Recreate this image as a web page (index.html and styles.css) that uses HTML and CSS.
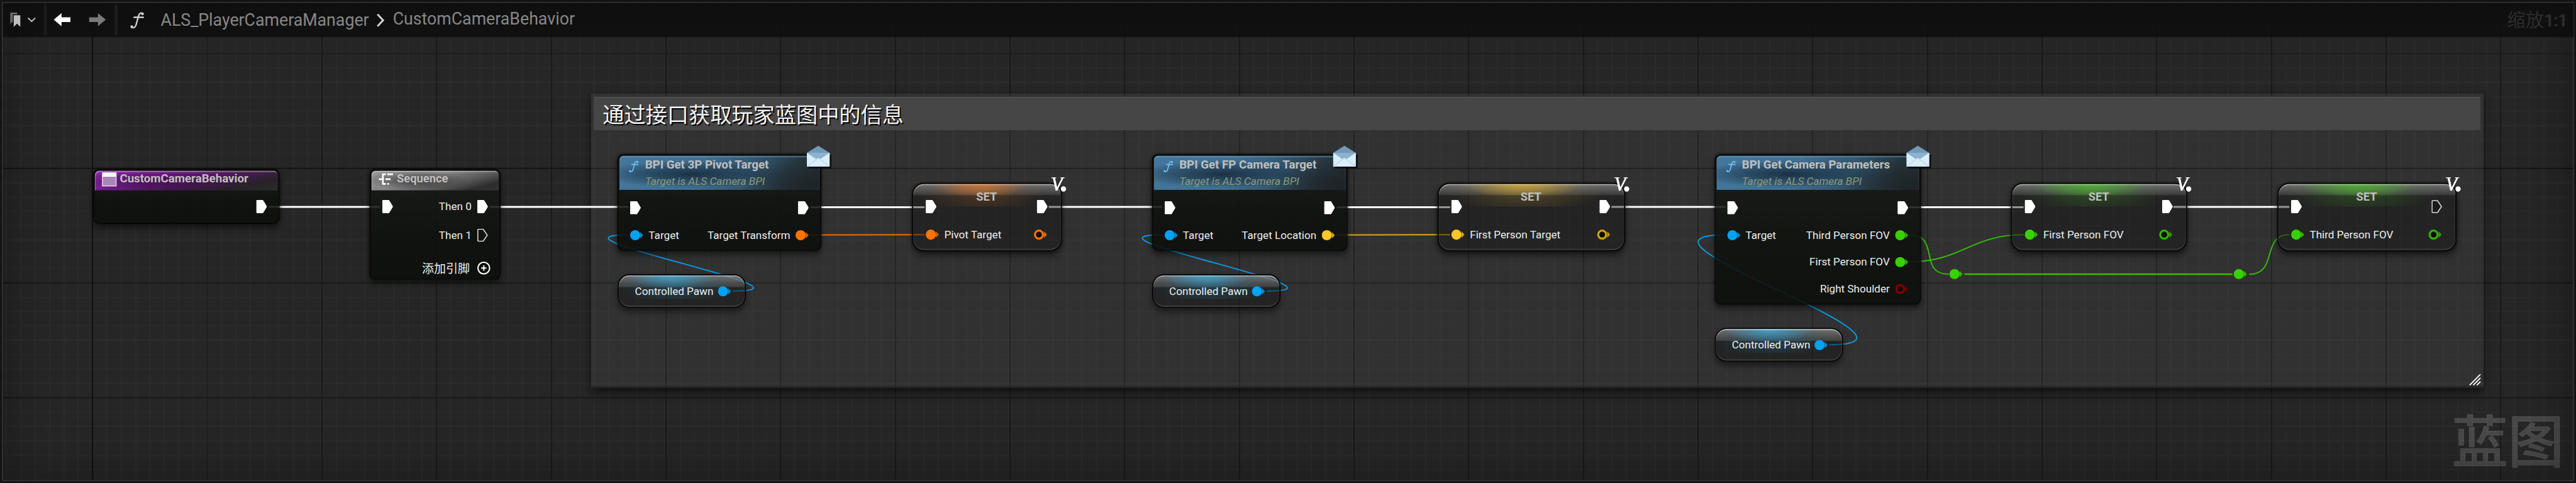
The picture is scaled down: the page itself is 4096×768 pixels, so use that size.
FILE: index.html
```
<!DOCTYPE html>
<html lang="zh-CN">
<head>
<meta charset="utf-8">
<title>CustomCameraBehavior</title>
<link rel="stylesheet" href="styles.css">
</head>
<body>
<svg class="defs" aria-hidden="true">
  <symbol id="exec" viewBox="0 0 18 22"><path d="M1.5 0H10.3Q11.3 0 12 .9L17.6 10.2Q18 11 17.6 11.8L12 21.1Q11.3 22 10.3 22H1.5Q0 22 0 20.5V1.5Q0 0 1.5 0Z" fill="#fff"/></symbol>
  <symbol id="exec-open" viewBox="0 0 18 22"><path d="M2 1H10L16.8 11 10 21H2Q1 21 1 20V2Q1 1 2 1Z" fill="#111" fill-opacity=".5" stroke="#d8d8d8" stroke-width="1.7" stroke-linejoin="round"/></symbol>
  <symbol id="pin" viewBox="0 0 22 18"><path d="M17 3.5L22 9l-5 5.5Z" fill="currentColor" opacity=".8"/><circle cx="8.5" cy="9" r="8.5" fill="currentColor"/></symbol>
  <symbol id="pin-open" viewBox="0 0 22 18"><path d="M17 3.5L22 9l-5 5.5Z" fill="currentColor" opacity=".85"/><circle cx="8.5" cy="9" r="6.7" fill="#0d0d0d" stroke="currentColor" stroke-width="3.4"/></symbol>
  <symbol id="func" viewBox="0 0 23 28"><path d="M2.2 25.5C6 28.5 9 25 10.3 20L13.8 7C15 2.5 17.5 .5 21 2.6M6.5 9H22" fill="none" stroke="currentColor" stroke-width="2.5" stroke-linecap="round"/><circle cx="2.6" cy="24.6" r="2.3" fill="currentColor"/><circle cx="20.6" cy="3.2" r="2.3" fill="currentColor"/></symbol>
  <symbol id="mail" viewBox="0 0 42 40">
    <path d="M3 15H41V38H3Z" fill="#000" opacity=".75"/>
    <path d="M0 12L19 0L38 12V20H0Z" fill="#7399b9"/>
    <path d="M0 12H38V35H0Z" fill="#d5e9f8"/>
    <path d="M0 12H38L19 25Z" fill="#8db2d0"/>
    <path d="M0 12.5L15.5 22.5Q19 19.5 22.5 22.5L38 12.5V35H0Z" fill="#d9edfb"/>
    <path d="M1 34L16.5 22.5M37 34L21.5 22.5" stroke="#b6d0e3" stroke-width="1.2"/>
  </symbol>
  <symbol id="var" viewBox="0 0 26 26"><path d="M0 0H8.5V1.5H6.5L10 16.5 17.5 1.5H15.5V0H22.5V1.5H20.5L10 22.5H7.5L2.8 1.5H0Z" fill="#fff"/><circle cx="20.5" cy="19.5" r="4.4" fill="#fff"/></symbol>
</svg>

<div class="window">
<div class="stage">
  <main class="graph">
    <section class="comment">
      <header class="comment-head">通过接口获取玩家蓝图中的信息</header>
      <svg class="grip" viewBox="0 0 20 20"><path d="M1 19L19 1M7 19L19 7M13 19L19 13" stroke="#fff" stroke-width="1.9"/></svg>
    </section>

    <svg class="wires" viewBox="0 0 4313 809" fill="none">
      <g stroke="#fff" stroke-width="3.2">
        <path d="M450 346.500H636"/><path d="M820 346.500H1052"/><path d="M1357 347H1548"/><path d="M1756 346.500H1946"/>
        <path d="M2238 347H2428"/><path d="M2698 346.500H2889"/><path d="M3197 347H3388"/><path d="M3639 346.500H3833"/>
      </g>
      <g stroke="#0a9ce8" stroke-width="2">
        <path d="M1227 487.500C1395 487.500 885 393.500 1053 393.500"/>
        <path d="M2121 487.500C2289 487.500 1779 393.500 1947 393.500"/>
        <path d="M3063 577.500C3273 577.500 2679 393.500 2889 393.500"/>
      </g>
      <path d="M1356 393.500L1548 393" stroke="#e06800" stroke-width="2.4"/>
      <path d="M2237 393.500L2428 393" stroke="#cf9c17" stroke-width="2.4"/>
      <g stroke="#35bd0a" stroke-width="2">
        <path d="M3197 393.500C3250 393.500 3210 459.300 3263 459.300"/>
        <path d="M3197 438.500C3285 438.500 3300 393 3388 393"/>
        <path d="M3289 459.300H3738" stroke-width="2.8"/>
        <path d="M3766 459.300C3815 459.300 3785 393 3833 393"/>
      </g>
    </svg>

    <svg class="pin c-green knot knot-a"><use href="#pin"/></svg>
    <svg class="pin c-green knot knot-b"><use href="#pin"/></svg>

    <article class="node event n-event">
      <header class="bar"><span class="event-icon"></span><h2>CustomCameraBehavior</h2></header>
      <div class="row end exec-row"><svg class="exec"><use href="#exec"/></svg></div>
    </article>

    <article class="node seq n-seq">
      <header class="bar">
        <svg class="seq-icon" viewBox="0 0 24 20"><path d="M0 10H9M11.500 10H20M7 2V18M6 2H12M14.500 2H24M6 18H12M14.500 18H17.500" fill="none" stroke="#fff" stroke-width="2.8"/></svg>
        <h2>Sequence</h2>
      </header>
      <div class="row exec-row"><svg class="exec"><use href="#exec"/></svg><span class="out">Then 0<svg class="exec"><use href="#exec"/></svg></span></div>
      <div class="row end then"><span class="out">Then 1<svg class="exec"><use href="#exec-open"/></svg></span></div>
      <div class="row end add"><span>添加引脚</span><svg class="plus" viewBox="0 0 24 24"><circle cx="12" cy="12" r="9.8" fill="none" stroke="#fff" stroke-width="2.2"/><path d="M12 7.500V16.500M7.500 12H16.500" stroke="#fff" stroke-width="2.2"/></svg></div>
    </article>

    <article class="node fn n-pivot">
      <header class="fn-head"><svg class="fn-icon"><use href="#func"/></svg><div><h2>BPI Get 3P Pivot Target</h2><p>Target is ALS Camera BPI</p></div></header>
      <div class="row exec-row"><svg class="exec"><use href="#exec"/></svg><svg class="exec"><use href="#exec"/></svg></div>
      <div class="row"><span class="in"><svg class="pin c-blue"><use href="#pin"/></svg>Target</span><span class="out">Target Transform<svg class="pin c-orange"><use href="#pin"/></svg></span></div>
      <svg class="mail"><use href="#mail"/></svg>
    </article>
    <article class="node get n-pawn1"><span>Controlled Pawn</span><svg class="pin c-blue"><use href="#pin"/></svg></article>
    <article class="node set orange n-set1">
      <div class="set-top"><svg class="exec"><use href="#exec"/></svg><h2>SET</h2><svg class="exec"><use href="#exec"/></svg></div>
      <div class="set-row"><span class="in"><svg class="pin c-orange"><use href="#pin"/></svg>Pivot Target</span><svg class="pin c-orange"><use href="#pin-open"/></svg></div>
      <svg class="var"><use href="#var"/></svg>
    </article>

    <article class="node fn n-fp">
      <header class="fn-head"><svg class="fn-icon"><use href="#func"/></svg><div><h2>BPI Get FP Camera Target</h2><p>Target is ALS Camera BPI</p></div></header>
      <div class="row exec-row"><svg class="exec"><use href="#exec"/></svg><svg class="exec"><use href="#exec"/></svg></div>
      <div class="row"><span class="in"><svg class="pin c-blue"><use href="#pin"/></svg>Target</span><span class="out">Target Location<svg class="pin c-yellow"><use href="#pin"/></svg></span></div>
      <svg class="mail"><use href="#mail"/></svg>
    </article>
    <article class="node get n-pawn2"><span>Controlled Pawn</span><svg class="pin c-blue"><use href="#pin"/></svg></article>
    <article class="node set yellow n-set2">
      <div class="set-top"><svg class="exec"><use href="#exec"/></svg><h2>SET</h2><svg class="exec"><use href="#exec"/></svg></div>
      <div class="set-row"><span class="in"><svg class="pin c-yellow"><use href="#pin"/></svg>First Person Target</span><svg class="pin c-yellow dim"><use href="#pin-open"/></svg></div>
      <svg class="var"><use href="#var"/></svg>
    </article>

    <article class="node fn n-params">
      <header class="fn-head"><svg class="fn-icon"><use href="#func"/></svg><div><h2>BPI Get Camera Parameters</h2><p>Target is ALS Camera BPI</p></div></header>
      <div class="row exec-row"><svg class="exec"><use href="#exec"/></svg><svg class="exec"><use href="#exec"/></svg></div>
      <div class="row"><span class="in"><svg class="pin c-blue"><use href="#pin"/></svg>Target</span><span class="out">Third Person FOV<svg class="pin c-green"><use href="#pin"/></svg></span></div>
      <div class="row end"><span class="out">First Person FOV<svg class="pin c-green"><use href="#pin"/></svg></span></div>
      <div class="row end"><span class="out">Right Shoulder<svg class="pin c-red"><use href="#pin-open"/></svg></span></div>
      <svg class="mail"><use href="#mail"/></svg>
    </article>
    <article class="node get n-pawn3"><span>Controlled Pawn</span><svg class="pin c-blue"><use href="#pin"/></svg></article>
    <article class="node set green n-set3">
      <div class="set-top"><svg class="exec"><use href="#exec"/></svg><h2>SET</h2><svg class="exec"><use href="#exec"/></svg></div>
      <div class="set-row"><span class="in"><svg class="pin c-green"><use href="#pin"/></svg>First Person FOV</span><svg class="pin c-green dim"><use href="#pin-open"/></svg></div>
      <svg class="var"><use href="#var"/></svg>
    </article>
    <article class="node set green n-set4">
      <div class="set-top"><svg class="exec"><use href="#exec"/></svg><h2>SET</h2><svg class="exec"><use href="#exec-open"/></svg></div>
      <div class="set-row"><span class="in"><svg class="pin c-green"><use href="#pin"/></svg>Third Person FOV</span><svg class="pin c-green dim"><use href="#pin-open"/></svg></div>
      <svg class="var"><use href="#var"/></svg>
    </article>

    <div class="watermark">蓝图</div>
  </main>

  <nav class="toolbar">
    <svg class="marks" viewBox="0 0 18 25"><path d="M0 0H12V3H4.500V15L0 19Z" fill="#6a6a6a"/><path d="M6 4.500H17V24L11.500 18.500 6 24Z" fill="#c0c0c0"/></svg>
    <svg class="caret" viewBox="0 0 14 9"><path d="M1 1L7 7 13 1" fill="none" stroke="#c0c0c0" stroke-width="2"/></svg>
    <i class="sep"></i>
    <svg class="arrow back" viewBox="0 0 28 22"><path d="M0 11L13 0V7H28V15H13V22Z" fill="#fff"/></svg>
    <svg class="arrow fwd" viewBox="0 0 28 22"><path d="M28 11L15 0V7H0V15H15V22Z" fill="#7a7a7a"/></svg>
    <i class="sep sep-wide"></i>
    <svg class="crumb-icon"><use href="#func"/></svg>
    <span class="crumb">ALS_PlayerCameraManager</span>
    <svg class="chev" viewBox="0 0 14 22"><path d="M2 1L11.500 11 2 21" fill="none" stroke="#d5d5d5" stroke-width="3"/></svg>
    <span class="crumb crumb-last">CustomCameraBehavior</span>
    <span class="zoom">缩放<b>1:1</b></span>
  </nav>
</div>
</div>
</body>
</html>
```
FILE: styles.css
```
* { box-sizing: border-box; }
html, body { margin: 0; background: #151515; }
h2, p { margin: 0; }
svg { display: block; flex: none; }
.defs { position: absolute; width: 0; height: 0; }

.window { width: 4096px; height: 768px; overflow: hidden; contain: strict; }
.stage {
  position: relative;
  width: 4313px; height: 809px;
  overflow: hidden;
  transform: scale(.94969, .94932);
  transform-origin: 0 0;
  background: #151515;
  font: 18px/22px Roboto, "Noto Sans CJK SC", sans-serif;
  color: #eee;
}

/* grid canvas */
.graph {
  position: absolute; inset: 0;
  background:
    linear-gradient(#111, #111) 154px 0 / 2px 100% no-repeat,
    linear-gradient(#131313, #131313) 0 281px / 100% 2px no-repeat,
    repeating-linear-gradient(90deg, #1a1a1a 0 2px, transparent 2px 192px) -38px 0 / 5760px 100%,
    repeating-linear-gradient(180deg, #1a1a1a 0 2px, transparent 2px 192px) 0 89px / 100% 1920px,
    repeating-linear-gradient(90deg, #2b2b2b 0 2px, transparent 2px 24px) -14px 0 / 4800px 100%,
    repeating-linear-gradient(180deg, #2b2b2b 0 2px, transparent 2px 24px) 0 17px / 100% 2400px,
    #262626;
}
.graph::after {
  content: ""; position: absolute; inset: 3px;
  border: 2px solid #303030;
  box-shadow: inset 0 0 90px rgba(0,0,0,.36), 0 0 0 3px #131313;
  pointer-events: none;
}

.comment {
  position: absolute; left: 990px; top: 157px; width: 3168px; height: 493px;
  padding: 4px 4px 0 3px;
  background: rgba(255,255,255,.05);
  box-shadow: 0 6px 14px rgba(0,0,0,.6);
  border: 1px solid rgba(255,255,255,.02);
  border-bottom: 3px solid #242424;
}
.comment-head {
  height: 56px; padding: 0 0 4px 15px;
  display: flex; align-items: center;
  background: #464646; border-top: 2px solid #4f4f4f; border-radius: 3px 3px 0 0;
  font: 36px/50px "Noto Sans CJK SC", sans-serif; color: #f2f2f2;
  text-shadow: 2px 2px 1px #000;
}
.grip { position: absolute; right: 3px; bottom: 1px; width: 20px; height: 20px; }
.wires { position: absolute; inset: 0; width: 4313px; height: 809px; }

/* pins */
.exec { width: 18px; height: 22px; }
.pin { width: 22px; height: 18px; }
.c-blue { color: #00a2f2; }
.c-orange { color: #ff7300; }
.c-yellow { color: #ffc721; }
.c-green { color: #36d200; }
.c-red { color: #7c0000; }
.c-yellow.dim { color: #d3a217; }
.c-green.dim { color: #31b404; }
.knot { position: absolute; top: 450px; }
.knot-a { left: 3264px; }
.knot-b { left: 3740px; }

/* nodes */
.node {
  position: absolute;
  border: 2px solid #070707;
  box-shadow: 0 7px 10px rgba(0,0,0,.45), 0 0 4px rgba(0,0,0,.45);
}
.node h2 { font: bold 19.7px/24px Roboto, sans-serif; color: #c0c0be; white-space: nowrap; }
.node span { white-space: nowrap; }
.event, .seq, .fn {
  padding: 1px;
  border-radius: 10px;
  background: linear-gradient(rgba(25,27,24,.88), rgba(14,16,13,.88) 60%, rgba(12,14,11,.9));
}
.row { display: flex; align-items: center; justify-content: space-between; height: 45px; padding: 0 18px; }
.row.end { justify-content: flex-end; }
.in, .out { display: flex; align-items: center; gap: 9px; }

.bar { display: flex; align-items: center; height: 33px; border-radius: 7px 7px 0 0; }
.event .bar {
  gap: 6px; padding: 0 0 4px 12px;
  background:
    radial-gradient(ellipse 150px 17px at 36% 50%, rgba(60,10,75,.75), transparent),
    linear-gradient(168deg, rgba(140,40,170,1) 0%, rgba(125,30,150,.95) 30%, rgba(90,25,108,.7) 58%, rgba(50,42,52,.6) 80%, #2c2c2c);
  box-shadow: inset 1px 2px 1px rgba(255,255,255,.4);
}
.event-icon { width: 24px; height: 23px; border: 1.5px solid #fff; border-top: 7px solid #fff; background: #ab85b8; }
.seq .bar {
  gap: 7px; padding: 0 0 4px 12px;
  background:
    radial-gradient(ellipse 85px 16px at 36% 50%, rgba(45,45,45,.8), transparent),
    linear-gradient(165deg, #969696, #868686 40%, #5a5a5a 65%, #2d2d2d 85%, #333);
  box-shadow: inset 1px 2px 1px rgba(255,255,255,.4);
}
.seq-icon { width: 24px; height: 20px; }
.seq h2 { font-size: 19.3px; }
.bar + .exec-row { height: 54px; }
.seq .then { height: 42px; }
.seq .add { height: 69px; gap: 11px; font: 20px/24px "Noto Sans CJK SC", sans-serif; padding-right: 13px; }
.plus { width: 24px; height: 24px; }

.fn-head {
  display: flex; gap: 11px; height: 57px; padding: 2.5px 0 0 16px;
  border-radius: 7px 7px 0 0;
  background:
    radial-gradient(ellipse 46% 40% at 36% 54%, rgba(24,46,64,.95), rgba(28,52,72,.5) 60%, transparent),
    radial-gradient(ellipse 40% 75% at 100% 85%, #1e2427, transparent),
    linear-gradient(112deg, #44779c, #416f91 40%, #33556d 65%, #26363f 85%, #222b30);
  box-shadow: inset 0 2px 2px rgba(120,180,220,.5);
}
.fn-icon { width: 16px; height: 20px; margin-top: 5px; color: #6fc0f5; }
.fn-head p { font: italic 18.2px/22px Roboto, sans-serif; color: #8b9a78; margin-top: 5px; }
.fn .exec-row { height: 47px; margin-top: 6px; }

.get {
  display: flex; align-items: center; justify-content: flex-end; gap: 7px;
  width: 215px; height: 57px; padding-right: 23.5px;
  border-radius: 20px;
  background:
    radial-gradient(ellipse 36% 110% at 42% 0, rgba(68,176,224,.75), transparent) 0 0 / 100% 20px no-repeat,
    radial-gradient(ellipse 45% 90% at 45% 40%, rgba(30,110,145,.45), transparent) 0 0 / 100% 40px no-repeat,
    linear-gradient(rgba(190,190,190,.5), rgba(120,120,120,.3)) 0 0 / 100% 20px no-repeat,
    rgba(20,20,20,.45);
  box-shadow: inset 0 2px 1px rgba(255,255,255,.45), inset 0 -2px 1px rgba(120,120,120,.35), 0 7px 10px rgba(0,0,0,.45);
}

.set {
  padding: 10.5px 22px 0 21.5px;
  height: 115px; top: 306px;
  border-radius: 20px;
  background:
    radial-gradient(ellipse 32% 130% at 45% 0, rgba(var(--tint),.75), transparent) 0 0 / 100% 19px no-repeat,
    radial-gradient(ellipse 42% 110% at 47% 30%, rgba(var(--tint),.25), transparent) 0 0 / 100% 38px no-repeat,
    linear-gradient(rgba(190,190,190,.5), rgba(120,120,120,.25)) 0 0 / 100% 19px no-repeat,
    rgba(20,20,20,.45);
  box-shadow: inset 0 2px 1px rgba(255,255,255,.45), inset 0 -2px 1px rgba(120,120,120,.35), 0 7px 10px rgba(0,0,0,.45), 0 0 4px rgba(0,0,0,.45);
}
.set.orange { --tint: 225,120,40; }
.set.yellow { --tint: 220,175,50; }
.set.green { --tint: 75,190,40; }
.set-top { display: flex; justify-content: space-between; align-items: flex-end; height: 38.5px; }
.set-top h2 { align-self: flex-start; font-size: 19.3px; line-height: 22px; }
.set-row { display: flex; justify-content: space-between; align-items: center; height: 36px; margin-top: 18px; padding-right: 1px; }

.mail { position: absolute; right: -20px; top: -16px; width: 42px; height: 40px; }
.var { position: absolute; right: -10px; top: -11px; width: 26px; height: 26px; }

/* placement on the canvas */
.n-event { left: 155.5px; top: 282.5px; width: 312px; height: 92px; }
.n-seq { left: 618.5px; top: 282.5px; width: 219px; height: 185px; }
.n-pivot { left: 1034px; top: 258px; width: 341px; height: 162px; }
.n-fp { left: 1928.5px; top: 258px; width: 327.5px; height: 162px; }
.n-params { left: 2870.5px; top: 258px; width: 345.5px; height: 251.5px; }
.n-pawn1 { left: 1034px; top: 459px; }
.n-pawn2 { left: 1928.5px; top: 459px; }
.n-pawn3 { left: 2870.5px; top: 549px; }
.n-set1 { left: 1526.5px; width: 251.5px; }
.n-set2 { left: 2406.5px; width: 314px; }
.n-set3 { left: 3366.5px; width: 295.5px; }
.n-set4 { left: 3812.5px; width: 300.5px; }

.watermark {
  position: absolute; right: 20px; bottom: 18px;
  font: 500 94px/116px "Noto Sans CJK SC", sans-serif;
  -webkit-text-stroke: 1px rgba(255,255,255,.1);
  color: rgba(255,255,255,.16);
}

/* toolbar */
.toolbar {
  position: absolute; left: 5px; top: 5px; width: 4304px; height: 57px;
  display: flex; align-items: center;
  padding: 0 11px 0 12px;
  background: rgba(13,13,13,.86);
}
.marks { width: 18px; height: 25px; }
.caret { width: 14px; height: 9px; margin-left: 11px; }
.sep { width: 4px; height: 51px; margin-left: 14px; background: #1d1d1d; }
.sep-wide { width: 5px; margin-left: 15px; }
.arrow { width: 28px; height: 22px; margin-bottom: 2px; }
.back { margin-left: 12px; }
.fwd { margin-left: 31px; }
.crumb-icon { width: 23px; height: 28px; margin-left: 21px; color: #cfcfcf; }
.crumb { font-size: 28.15px; line-height: 34px; color: #878787; margin-left: 28px; }
.chev { width: 14px; height: 22px; margin-left: 12px; }
.crumb-last { margin-left: 14px; margin-bottom: 3px; }
.zoom { margin-left: auto; font: 31px/40px "Noto Sans CJK SC", sans-serif; color: #2c2c2c; margin-bottom: 6px; }
.zoom b { font: bold 29px Roboto, sans-serif; letter-spacing: -1px; }
```
